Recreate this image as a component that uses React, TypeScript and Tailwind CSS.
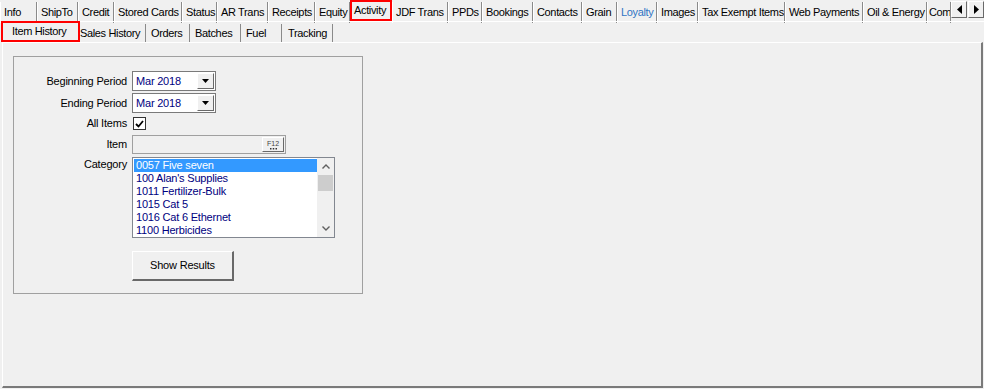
const font = { fontFamily: '"Liberation Sans", Arial, sans-serif' }

const topTabs = [
  { label: "Info", w: 37 },
  { label: "ShipTo", w: 41 },
  { label: "Credit", w: 36 },
  { label: "Stored Cards", w: 68 },
  { label: "Status", w: 35 },
  { label: "AR Trans", w: 51 },
  { label: "Receipts", w: 47 },
  { label: "Equity", w: 35 },
  { label: "Activity", w: 42, active: true },
  { label: "JDF Trans", w: 56 },
  { label: "PPDs", w: 34 },
  { label: "Bookings", w: 51 },
  { label: "Contacts", w: 49 },
  { label: "Grain", w: 35 },
  { label: "Loyalty", w: 40, blue: true },
  { label: "Images", w: 41 },
  { label: "Tax Exempt Items", w: 87 },
  { label: "Web Payments", w: 78 },
  { label: "Oil & Energy", w: 64 },
  { label: "Com", w: 24 },
]

const subTabs = [
  { label: "Sales History", w: 65, pl: "pl-0" },
  { label: "Orders", w: 44, pl: "pl-[5px] border-l border-l-[#8a8a8a]" },
  { label: "Batches", w: 51, pl: "pl-[5px] border-l border-l-[#8a8a8a]" },
  { label: "Fuel", w: 41, pl: "pl-[5px] border-l border-l-[#8a8a8a]" },
  { label: "Tracking", w: 52, pl: "pl-[6px] border-l border-l-[#8a8a8a] border-r border-r-[#8a8a8a]" },
]

const categories = [
  "0057 Five seven",
  "100 Alan's Supplies",
  "1011 Fertilizer-Bulk",
  "1015 Cat 5",
  "1016 Cat 6 Ethernet",
  "1100 Herbicides",
]

function Combo({ value }: { value: string }) {
  return (
    <div className="w-[84px] h-[20px] border border-[#7a7a7a] bg-white flex items-center justify-between pl-[3px] pr-[1px]">
      <span className="text-[#000080] tracking-[-0.2px]">{value}</span>
      <span className="w-[17px] h-[16px] bg-[#f0f0f0] border-t border-l border-t-white border-l-white border-r border-b border-r-[#696969] border-b-[#696969] flex items-center justify-center">
        <svg width="7" height="4" viewBox="0 0 7 4"><path d="M0 0h7L3.5 4z" fill="#000" /></svg>
      </span>
    </div>
  )
}

function Label({ children, className = "" }: { children: React.ReactNode; className?: string }) {
  return <div className={"w-[114px] text-right pr-[1px] tracking-[-0.2px] " + className}>{children}</div>
}

export default function App() {
  return (
    <div style={font} className="w-[984px] h-[389px] bg-[#f0f0f0] text-[11px] text-black overflow-hidden flex flex-col select-none">
      <div className="h-[21px] flex shrink-0">
        {topTabs.map((t) => (
          <div
            key={t.label}
            style={{ width: t.w }}
            className={
              "h-full flex items-center whitespace-nowrap overflow-hidden tracking-[-0.35px] " +
              (t.active
                ? "border-2 border-[#ff0000] pl-[2px] pb-[1px] bg-[#f0f0f0]"
                : "border-l border-l-white border-r border-r-[#8a8a8a] mt-[2px] " + (t.label === "Com" ? "pl-[1px]" : "pl-[3px]")) +
              (t.blue ? " text-[#2f74c4]" : "")
            }
          >
            {t.label}
          </div>
        ))}
        <div className="flex items-start pt-[1px] gap-[1px]">
          {["M5 0v9L0 4.5z", "M0 0v9l5-4.5z"].map((d) => (
            <div key={d} className="w-[16px] h-[17px] bg-[#f0f0f0] border border-t-white border-l-white border-r-[#696969] border-b-[#696969] flex items-center justify-center">
              <svg width="5" height="9" viewBox="0 0 5 9"><path d={d} fill="#000" /></svg>
            </div>
          ))}
        </div>
      </div>

      <div className="h-[21px] flex shrink-0 border-t border-t-white">
        <div className="w-[79px] h-[21px] -mt-[1px] ml-[1px] border-2 border-[#ff0000] pl-[9px] flex items-center whitespace-nowrap tracking-[-0.35px]">
          Item History
        </div>
        {subTabs.map((t) => (
          <div
            key={t.label}
            style={{ width: t.w }}
            className={"flex items-center whitespace-nowrap tracking-[-0.35px] mt-[2px] h-[19px] " + t.pl}
          >
            {t.label}
          </div>
        ))}
      </div>

      <div className="flex-1 ml-[2px] mr-[1px] mb-[1px] border-t border-l border-t-white border-l-white border-r-2 border-b-2 border-r-[#7a7a7a] border-b-[#7a7a7a] pt-[13px] pl-[10px]">
        <div className="w-[350px] h-[238px] border border-[#a0a0a0] flex flex-col pt-[14px]">
          <div className="flex items-center gap-[4px]">
            <Label>Beginning Period</Label>
            <Combo value="Mar 2018" />
          </div>
          <div className="flex items-center gap-[4px] mt-[2px]">
            <Label>Ending Period</Label>
            <Combo value="Mar 2018" />
          </div>
          <div className="flex items-center gap-[4px] mt-[4px] h-[13px]">
            <Label>All Items</Label>
            <div className="ml-[1px] w-[13px] h-[13px] border border-[#333] bg-white flex items-center justify-center">
              <svg width="9" height="8" viewBox="0 0 9 8"><path d="M1 4l2.5 2.5L8 1" stroke="#000" strokeWidth="1.8" fill="none" /></svg>
            </div>
          </div>
          <div className="flex items-center gap-[4px] mt-[5px]">
            <Label>Item</Label>
            <div className="w-[154px] h-[19px] border border-[#a0a0a0] bg-[#f0f0f0] flex justify-end items-center pr-[1px]">
              <div className="w-[22px] h-[15px] border border-t-white border-l-white border-r-[#696969] border-b-[#696969] flex flex-col items-center justify-center">
                <span className="text-[7px] leading-[7px] text-[#444]">F12</span>
                <svg width="7" height="2" viewBox="0 0 7 2" className="mt-[1px]">
                  <rect x="0" y="0" width="1.5" height="1.5" fill="#333" />
                  <rect x="2.75" y="0" width="1.5" height="1.5" fill="#333" />
                  <rect x="5.5" y="0" width="1.5" height="1.5" fill="#333" />
                </svg>
              </div>
            </div>
          </div>
          <div className="flex items-start gap-[4px] mt-[3px]">
            <Label className="-mt-[1px]">Category</Label>
            <div className="w-[203px] h-[81px] border border-[#828790] bg-white flex">
              <div className="flex-1 pt-[1px] pl-[1px] flex flex-col">
                {categories.map((c, i) => (
                  <div
                    key={c}
                    className={
                      "h-[13px] leading-[13px] pl-[2px] whitespace-nowrap tracking-[-0.2px] " +
                      (i === 0 ? "bg-[#3399ff] text-white" : "text-[#000080]")
                    }
                  >
                    {c}
                  </div>
                ))}
              </div>
              <div className="w-[17px] h-full bg-[#f0f0f0] flex flex-col items-center">
                <div className="h-[17px] flex items-center justify-center">
                  <svg width="8" height="5" viewBox="0 0 8 5"><path d="M0.5 4.5L4 1l3.5 3.5" stroke="#606060" strokeWidth="1.4" fill="none" /></svg>
                </div>
                <div className="w-[15px] h-[16px] bg-[#cdcdcd]" />
                <div className="flex-1" />
                <div className="h-[17px] flex items-center justify-center">
                  <svg width="8" height="5" viewBox="0 0 8 5"><path d="M0.5 0.5L4 4l3.5-3.5" stroke="#606060" strokeWidth="1.4" fill="none" /></svg>
                </div>
              </div>
            </div>
          </div>
          <div className="pl-[118px] mt-[13px]">
            <button className="w-[102px] h-[30px] bg-[#f0f0f0] border border-t-white border-l-white border-r-2 border-b-2 border-r-[#696969] border-b-[#696969] text-[11px] tracking-[-0.2px]">
              Show Results
            </button>
          </div>
        </div>
      </div>
    </div>
  )
}
